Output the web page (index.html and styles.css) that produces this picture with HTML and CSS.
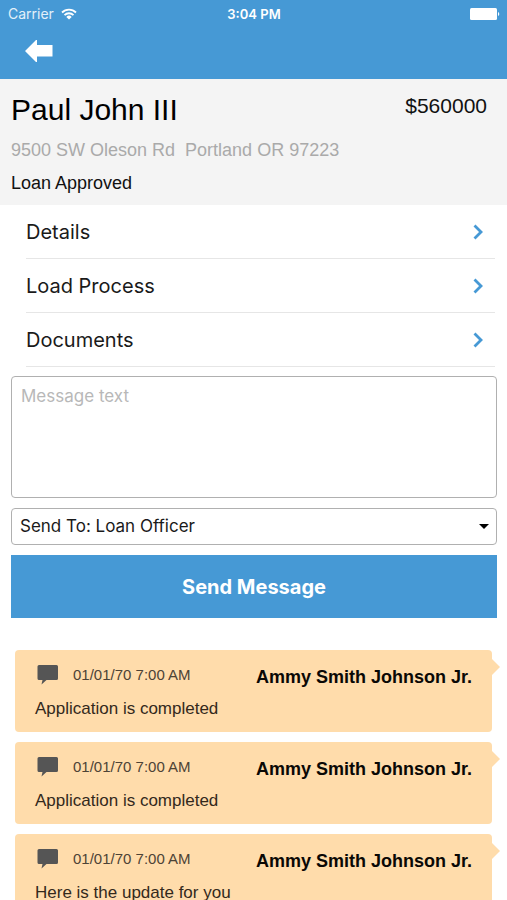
FILE: index.html
```html
<!DOCTYPE html>
<html lang="en">
<head>
<meta charset="utf-8">
<meta name="viewport" content="width=device-width, initial-scale=1">
<title>Paul John III</title>
<link rel="stylesheet" href="styles.css">
</head>
<body>
<svg class="defs" width="0" height="0" aria-hidden="true">
  <symbol id="chevron" viewBox="0 0 10 16"><path d="M1.500 1.500 8 8l-6.500 6.500" fill="none" stroke="currentColor" stroke-width="2.800"/></symbol>
  <symbol id="bubble" viewBox="0 0 22 20"><path d="M2 0h17.500a1.500 1.500 0 0 1 1.500 1.500v12a1.500 1.500 0 0 1-1.500 1.500H9.500L4.500 19.500 5.500 15H2A1.500 1.500 0 0 1 .5 13.500v-12A1.500 1.500 0 0 1 2 0z" fill="currentColor"/></symbol>
</svg>
<header class="top">
  <div class="status">
    <div class="carrier">
      <span>Carrier</span>
      <svg width="16" height="12" viewBox="0 0 16 12" aria-hidden="true">
        <path d="M1 4.500a10 10 0 0 1 14 0M3.500 7.100a6.400 6.400 0 0 1 9 0" fill="none" stroke="#fff" stroke-width="1.800"/>
        <path d="M5.300 8.900a3.800 3.800 0 0 1 5.400 0L8 11.600z" fill="#fff"/>
      </svg>
    </div>
    <span class="clock">3:04 PM</span>
    <svg class="battery" width="30" height="12" viewBox="0 0 30 12" aria-hidden="true">
      <rect width="27" height="12" rx="1.500" fill="#fff"/><path d="M28 4a2.200 2.200 0 0 1 0 4z" fill="#fff"/>
    </svg>
  </div>
  <button class="back" type="button" aria-label="Back">
    <svg width="28" height="22" viewBox="0 0 28 22" aria-hidden="true"><path d="M0 11 11 0h1v5h15.500v11.500H12V22h-1z" fill="#fff"/></svg>
  </button>
</header>
<main>
  <section class="summary">
    <div class="heading">
      <h1>Paul John III</h1>
      <span class="amount">$560000</span>
    </div>
    <p class="address">9500 SW Oleson Rd&nbsp; Portland OR 97223</p>
    <p class="state">Loan Approved</p>
  </section>
  <nav class="links">
    <a href="#details">Details<svg width="10" height="16"><use href="#chevron"/></svg></a>
    <a href="#process">Load Process<svg width="10" height="16"><use href="#chevron"/></svg></a>
    <a href="#documents">Documents<svg width="10" height="16"><use href="#chevron"/></svg></a>
  </nav>
  <form class="compose">
    <textarea aria-label="Message text" placeholder="Message text"></textarea>
    <div class="picker">
      <select aria-label="Recipient"><option>Send To: Loan Officer</option></select>
    </div>
    <button type="button">Send Message</button>
  </form>
  <section class="messages">
    <article>
      <div class="meta">
        <svg width="22" height="20" aria-hidden="true"><use href="#bubble"/></svg>
        <time>01/01/70 7:00 AM</time>
        <strong>Ammy Smith Johnson Jr.</strong>
      </div>
      <p>Application is completed</p>
    </article>
    <article>
      <div class="meta">
        <svg width="22" height="20" aria-hidden="true"><use href="#bubble"/></svg>
        <time>01/01/70 7:00 AM</time>
        <strong>Ammy Smith Johnson Jr.</strong>
      </div>
      <p>Application is completed</p>
    </article>
    <article>
      <div class="meta">
        <svg width="22" height="20" aria-hidden="true"><use href="#bubble"/></svg>
        <time>01/01/70 7:00 AM</time>
        <strong>Ammy Smith Johnson Jr.</strong>
      </div>
      <p>Here is the update for you</p>
    </article>
  </section>
</main>
</body>
</html>
```
FILE: styles.css
```css
* { box-sizing: border-box; }
html { scrollbar-width: none; }
body {
  margin: 0;
  background: #fff;
  color: #111;
  font-family: "Liberation Sans", Arial, sans-serif;
}
h1, p { margin: 0; font-weight: 400; }
svg { display: block; flex: none; }
.defs { position: absolute; }

.top { background: #4699d5; color: #fff; padding-bottom: 16px; }
.status {
  display: grid;
  grid-template-columns: 1fr auto 1fr;
  align-items: center;
  height: 28px;
  padding: 0 7px 0 8px;
  font: 13px/28px Inter, sans-serif;
}
.carrier { display: flex; align-items: center; gap: 7px; font-size: 14px; color: #e3f0f9; }
.clock { font-weight: 600; }
.battery { justify-self: end; }
.back { display: block; border: 0; background: none; padding: 12px 25px 0; margin: 0; }
.back svg { margin-bottom: 1px; }

.summary { background: #f4f4f4; padding: 13px 11px 10px; }
.heading { display: flex; justify-content: space-between; padding-right: 9px; }
h1 { font-size: 30px; line-height: 36px; color: #000; }
.amount { font-size: 21px; line-height: 28px; }
.address { font-size: 18px; line-height: 24px; margin-top: 10px; color: #aaa; }
.state { font-size: 18px; line-height: 24px; margin-top: 9px; }

.links { padding: 0 12px 0 26px; }
.links a {
  display: flex;
  justify-content: space-between;
  align-items: center;
  height: 54px;
  padding-right: 12px;
  border-bottom: 1px solid #e6e6e6;
  color: #1a1a1a;
  font: 20px/24px Inter, sans-serif;
  text-decoration: none;
}
.links svg { color: #4699d5; }

.compose { display: grid; gap: 10px; padding: 9px 10px 0 11px; }
.compose textarea, .compose select {
  display: block;
  width: 100%;
  border: 1px solid #b0b0b0;
  border-radius: 4px;
  background: #fff;
  font: 17px/20px Inter, sans-serif;
}
.compose textarea { height: 122px; padding: 9px; resize: none; }
.compose textarea::placeholder { color: #b8b8b8; }
.compose select { height: 37px; padding: 0 8px 2px; appearance: none; color: #1a1a1a; }
.picker { position: relative; }
.picker::after {
  content: "";
  position: absolute;
  top: 16px;
  right: 8px;
  border: 5px solid transparent;
  border-top-color: #000;
  border-bottom: 0;
  pointer-events: none;
}
.compose button {
  height: 63px;
  border: 0;
  background: #4699d5;
  color: #fff;
  font: 700 20px/24px Inter, sans-serif;
}

.messages { display: grid; gap: 10px; padding: 32px 15px 10px; }
article {
  position: relative;
  height: 82px;
  padding: 15px 20px;
  border-radius: 4px;
  background: #ffdcab;
}
article::after {
  content: "";
  position: absolute;
  top: 9px;
  left: 100%;
  border: 8px solid transparent;
  border-left-color: #ffdcab;
  border-right: 0;
}
.meta { display: flex; align-items: flex-start; height: 24px; padding-left: 2px; }
.meta svg { color: #555; }
.meta time { margin-left: 14px; font-size: 15px; line-height: 20px; color: #4d4336; }
.meta strong { margin-left: auto; font-size: 18px; line-height: 24px; color: #0a0805; }
article p { margin-top: 8px; font-size: 17px; line-height: 24px; color: #33291c; }
```
